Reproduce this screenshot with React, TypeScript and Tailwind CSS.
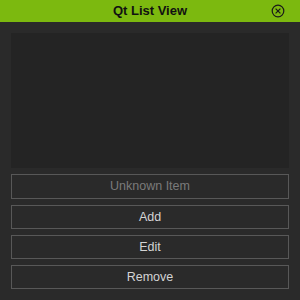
export default function App() {
  const buttons = ["Add", "Edit", "Remove"];
  return (
    <div
      className="w-[300px] h-[300px] bg-[#2a2a2a] flex flex-col"
      style={{ fontFamily: '"Liberation Sans", Arial, sans-serif' }}
    >
      <div className="h-[22px] bg-[#7cb90f] relative flex items-center justify-center">
        <span className="text-[13px] font-bold text-[#111]">Qt List View</span>
        <svg
          className="absolute left-[271px] top-[4px]"
          width="14"
          height="14"
          viewBox="0 0 14 14"
          fill="none"
          stroke="#1a1a1a"
          strokeWidth="1.2"
        >
          <circle cx="7" cy="7" r="5.8" />
          <path d="M4.6 4.6 L9.4 9.4 M9.4 4.6 L4.6 9.4" />
        </svg>
      </div>
      <div className="flex flex-col px-[11px] pt-[11px]">
        <div className="h-[135px] bg-[#242424]" />
        <div className="mt-[6px] h-[25px] border border-[#585858] flex items-center justify-center text-[12.5px] text-[#7a7a7a]">
          Unknown Item
        </div>
        {buttons.map((b) => (
          <div
            key={b}
            className="mt-[6px] h-[24px] border border-[#585858] flex items-center justify-center text-[12.5px] text-[#d4d4d4]"
          >
            {b}
          </div>
        ))}
      </div>
    </div>
  );
}
